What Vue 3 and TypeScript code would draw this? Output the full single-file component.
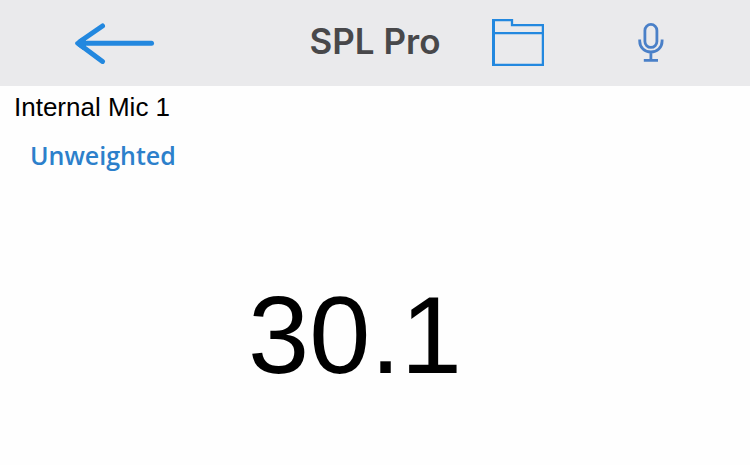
<script setup lang="ts">
import { ref } from 'vue'

const title = 'SPL Pro'
const inputName = 'Internal Mic 1'
const weighting = ref('Unweighted')
const level = ref(30.1)
</script>

<template>
  <div class="screen">
    <header class="bar">
      <div class="side side-left">
        <button class="icon-button" type="button" aria-label="Back">
          <svg width="80" height="42" viewBox="0 0 80 42" fill="none" stroke="#2388df" stroke-width="5" stroke-linecap="round">
            <path d="M12 21.2H76.500" />
            <path d="M27.500 4L5 19.500M27.500 39.500L5 22.800" />
            <path d="M0.500 20Q-0.400 21.500 1 23L8 28L13 21L8 15Z" fill="#2388df" stroke="none" />
          </svg>
        </button>
      </div>
      <h1 class="title">{{ title }}</h1>
      <div class="side side-right">
        <button class="icon-button" type="button" aria-label="Files">
          <svg width="52" height="48" viewBox="0 0 52 48" fill="none" stroke="#2388df">
            <path d="M1.500 0V47" stroke-width="3" />
            <path d="M0 1.100H20V6.200H50.900V45.800H0" stroke-width="2.300" />
            <path d="M0 14.200H51" stroke-width="2.300" />
          </svg>
        </button>
        <button class="icon-button" type="button" aria-label="Microphone">
          <svg width="26" height="40" viewBox="0 0 26 40" fill="none" stroke="#4a80c8" stroke-width="2.800">
            <rect x="6.900" y="1.400" width="12" height="23" rx="6" />
            <path d="M1.700 16.500V18C1.700 24.700 6.700 29 12.900 29S24.100 24.700 24.100 18V16.500M12.900 29V37.500M5.800 37.400H20" />
          </svg>
        </button>
      </div>
    </header>
    <main class="content">
      <p class="source">{{ inputName }}</p>
      <button class="weighting" type="button">{{ weighting }}</button>
      <output class="level">{{ level.toFixed(1) }}</output>
    </main>
  </div>
</template>

<style>
body {
  background: #fefefe;
}
</style>

<style scoped>
.screen {
  display: flex;
  flex-direction: column;
  font-family: "Liberation Sans", Helvetica, Arial, sans-serif;
  color: #000;
}

.bar {
  display: grid;
  grid-template-columns: 1fr auto 1fr;
  align-items: center;
  height: 86px;
  background: #eaeaec;
}

.side {
  display: flex;
  align-items: center;
}

.side-left {
  padding-left: 75px;
}

.side-right {
  justify-content: space-between;
  padding: 0 86px 0 52px;
}

.icon-button {
  display: flex;
  padding: 0;
  border: 0;
  background: none;
}

.title {
  margin: 0;
  padding-bottom: 4px;
  font-family: Inter, sans-serif;
  font-size: 35px;
  font-weight: 600;
  line-height: 42px;
  color: #48484a;
}

.content {
  display: flex;
  flex-direction: column;
  align-items: flex-start;
  padding: 5px 14px;
}

.source {
  margin: 0;
  font-size: 26px;
  line-height: 32px;
}

.weighting {
  margin: 16px 0 0 16px;
  padding: 0;
  border: 0;
  background: none;
  font-family: "Trebuchet MS", "Open Sans", sans-serif;
  font-size: 25px;
  font-weight: 600;
  line-height: 32px;
  color: #2c80cb;
}

.level {
  align-self: center;
  margin: 100px 40px 0 0;
  font-size: 110px;
  line-height: 128px;
}
</style>
